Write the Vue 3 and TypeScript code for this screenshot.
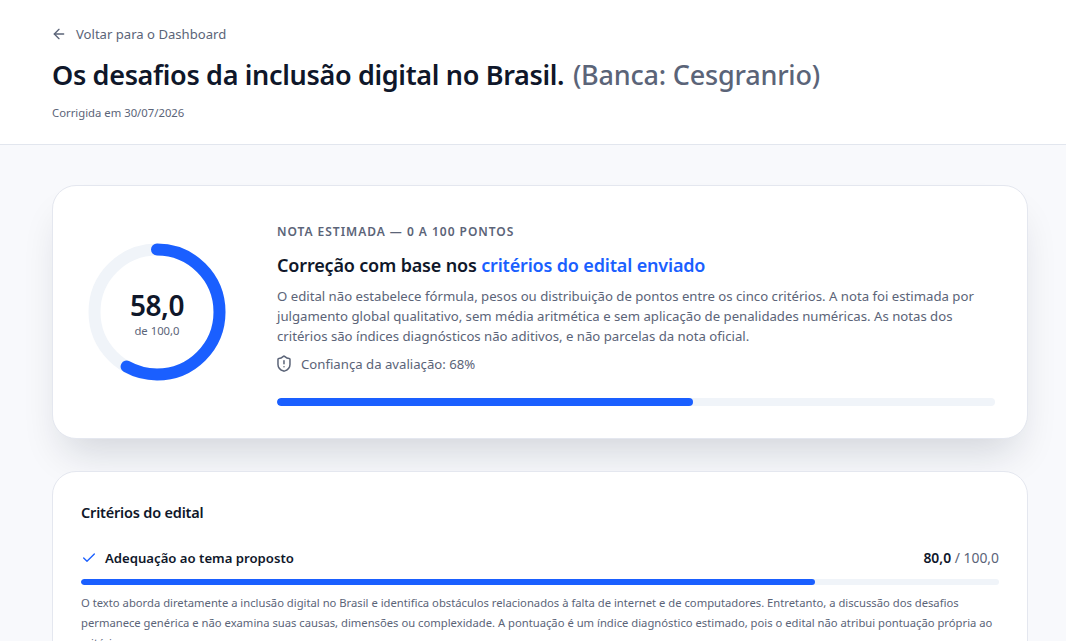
<script setup lang="ts">
const score = 58;
const radius = 62.5;
const circumference = 2 * Math.PI * radius;
const dash = `${(circumference * score) / 100} ${circumference}`;
const criterionWidth = '80%';
const scoreWidth = `${score}%`;
</script>

<template>
  <div class="page">
    <header class="top">
      <a class="back">
        <svg class="back-icon" viewBox="0 0 24 24" fill="none" stroke="currentColor" stroke-width="2" stroke-linecap="round" stroke-linejoin="round">
          <path d="M19 12H5" /><path d="m12 19-7-7 7-7" />
        </svg>
        <span>Voltar para o Dashboard</span>
      </a>
      <h1>Os desafios da inclusão digital no Brasil. <span class="banca">(Banca: Cesgranrio)</span></h1>
      <p class="date">Corrigida em 30/07/2026</p>
    </header>

    <main class="content">
      <section class="card score-card">
        <div class="ring">
          <svg viewBox="0 0 140 140" width="140" height="140">
            <circle cx="70" cy="70" :r="radius" fill="none" stroke="#f0f4f9" stroke-width="12" />
            <circle cx="70" cy="70" :r="radius" fill="none" stroke="#1a5fff" stroke-width="12" stroke-linecap="round" :stroke-dasharray="dash" transform="rotate(-90 70 70)" />
          </svg>
          <div class="ring-text">
            <strong>58,0</strong>
            <span>de 100,0</span>
          </div>
        </div>
        <div class="score-body">
          <p class="eyebrow">NOTA ESTIMADA — 0 A 100 PONTOS</p>
          <h2>Correção com base nos <span class="blue">critérios do edital enviado</span></h2>
          <p class="desc">O edital não estabelece fórmula, pesos ou distribuição de pontos entre os cinco critérios. A nota foi estimada por julgamento global qualitativo, sem média aritmética e sem aplicação de penalidades numéricas. As notas dos critérios são índices diagnósticos não aditivos, e não parcelas da nota oficial.</p>
          <div class="confidence">
            <svg viewBox="2.7 0.5 21.33 24" fill="none" stroke="currentColor" stroke-width="2" stroke-linecap="round" stroke-linejoin="round">
              <path d="M20 13c0 5-3.5 7.5-7.66 8.95a1 1 0 0 1-.67-.01C7.5 20.5 4 18 4 13V6a1 1 0 0 1 1-1c2 0 4.5-1.2 6.24-2.72a1.17 1.17 0 0 1 1.52 0C14.51 3.81 17 5 19 5a1 1 0 0 1 1 1z" />
              <path d="M12 8v4" /><path d="M12 16h.01" />
            </svg>
            <span>Confiança da avaliação: 68%</span>
          </div>
          <div class="bar score-bar"><div class="fill" :style="{ width: scoreWidth }"></div></div>
        </div>
      </section>

      <section class="card criteria">
        <h3>Critérios do edital</h3>
        <div class="crit-head">
          <div class="crit-name">
            <svg viewBox="0 0 24 24" fill="none" stroke="#1a5fff" stroke-width="2" stroke-linecap="round" stroke-linejoin="round">
              <path d="M20 6 9 17l-5-5" />
            </svg>
            <span>Adequação ao tema proposto</span>
          </div>
          <div class="crit-score"><strong>80,0</strong> / 100,0</div>
        </div>
        <div class="bar crit-bar"><div class="fill" :style="{ width: criterionWidth }"></div></div>
        <p class="crit-text">O texto aborda diretamente a inclusão digital no Brasil e identifica obstáculos relacionados à falta de internet e de computadores. Entretanto, a discussão dos desafios permanece genérica e não examina suas causas, dimensões ou complexidade. A pontuação é um índice diagnóstico estimado, pois o edital não atribui pontuação própria ao critério.</p>
      </section>
    </main>
  </div>
</template>

<style>
html, body { margin: 0; height: 100%; overflow: hidden; background: #f8f9fc; }
</style>

<style scoped>
.page {
  font-family: "Noto Sans", sans-serif;
  color: #0f172a;
  height: 641px;
  overflow: hidden;
  background: #f8f9fc;
}
.top {
  background: #fff;
  border-bottom: 1px solid #e2e6ee;
  padding: 24px 52px 0;
  height: 120px;
}
.back {
  display: flex;
  align-items: center;
  gap: 9px;
  color: #5b6478;
  font-size: 13.1px;
  line-height: 20px;
}
.back-icon { width: 16px; height: 16px; margin-left: -1px; }
h1 {
  margin: 13px 0 0;
  font-size: 27px;
  line-height: 36px;
  font-weight: 600;
  letter-spacing: -0.33px;
}
.banca { color: #5b6478; font-weight: 500; letter-spacing: -0.2px; margin-left: 2px; }
.date {
  margin: 12px 0 0;
  font-size: 11.3px;
  line-height: 16px;
  color: #5b6478;
}
.content {
  padding: 40px 38px 0 52px;
  display: flex;
  flex-direction: column;
  gap: 32px;
}
.card {
  background: #fff;
  border: 1px solid #e4e7ef;
  border-radius: 24px;
}
.score-card {
  display: flex;
  align-items: center;
  gap: 50px;
  padding: 32px;
  box-shadow: 0 24px 40px -12px rgba(15, 23, 42, 0.16);
}
.ring { position: relative; width: 140px; height: 140px; flex: none; margin-left: 2px; }
.ring svg { display: block; }
.ring-text {
  position: absolute;
  inset: 0;
  padding-top: 3px;
  display: flex;
  flex-direction: column;
  align-items: center;
  justify-content: center;
}
.ring-text strong { font-size: 28px; line-height: 35px; font-weight: 600; letter-spacing: -0.5px; }
.ring-text span { font-size: 11.3px; line-height: 16px; color: #5b6478; }
.score-body { flex: 1; min-width: 0; padding-top: 4px; }
.eyebrow {
  margin: 1px 0 -1px;
  font-size: 12px;
  line-height: 18px;
  font-weight: 600;
  letter-spacing: 0.97px;
  color: #5b6478;
}
h2 {
  margin: 11px 0 0;
  font-size: 18px;
  line-height: 28px;
  font-weight: 600;
  letter-spacing: -0.17px;
}
.blue { color: #1a5fff; }
.desc {
  margin: 7px 0 0;
  font-size: 13.18px;
  line-height: 20px;
  color: #5b6478;
}
.confidence {
  display: flex;
  align-items: center;
  gap: 8px;
  margin-top: 8px;
  font-size: 13.18px;
  line-height: 20px;
  color: #5b6478;
}
.confidence svg { width: 16px; height: 18px; }
.bar { background: #f0f4f9; border-radius: 999px; overflow: hidden; }
.fill { height: 100%; background: #1a5fff; border-radius: 999px; }
.score-bar { height: 8px; margin-top: 24px; }
.criteria { padding: 28px; }
h3 { margin: 0; font-size: 14.5px; line-height: 24px; font-weight: 600; letter-spacing: -0.2px; }
.crit-head {
  display: flex;
  justify-content: space-between;
  align-items: center;
  margin-top: 24px;
}
.crit-name {
  display: flex;
  align-items: center;
  gap: 8px;
  font-size: 13.15px;
  line-height: 20px;
  font-weight: 600;
}
.crit-name svg { width: 16px; height: 16px; }
.crit-score { font-size: 13.9px; line-height: 20px; color: #5b6478; }
.crit-score strong { color: #0f172a; font-weight: 600; }
.crit-bar { height: 6px; margin-top: 11px; }
.crit-text {
  margin: 8px 0 0;
  font-size: 11.24px;
  line-height: 20px;
  color: #5b6478;
}
</style>
